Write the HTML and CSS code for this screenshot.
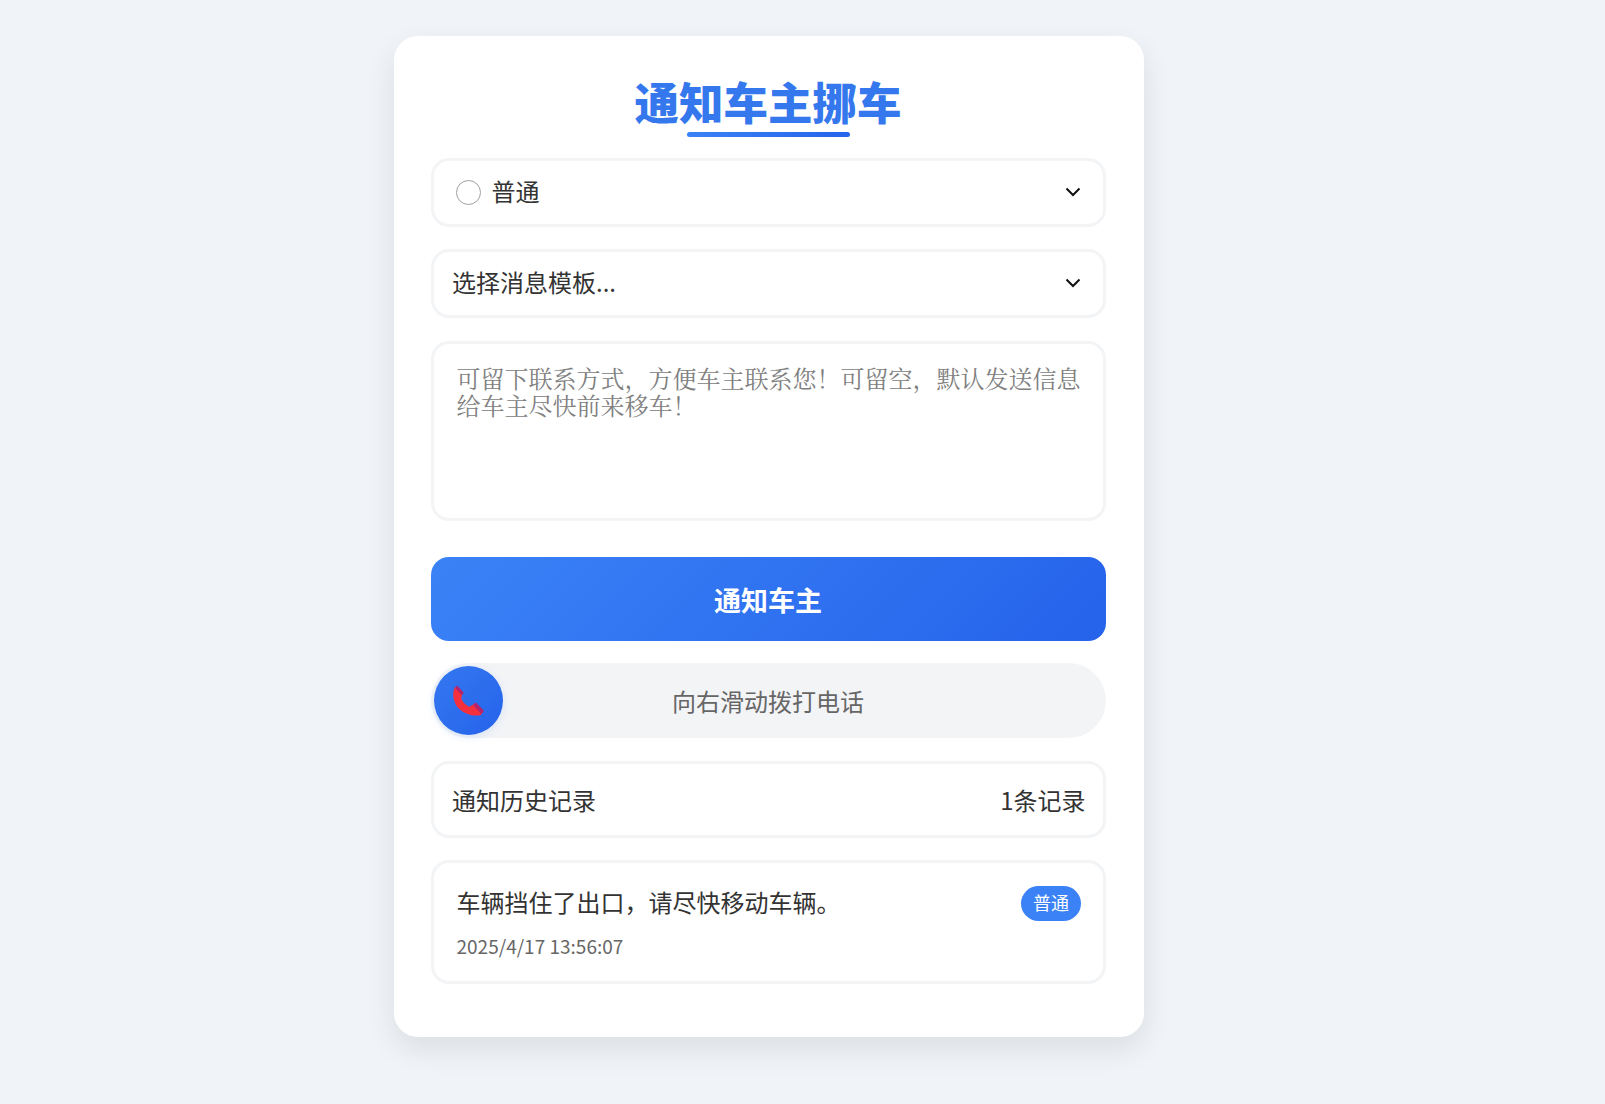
FILE: index.html
```html
<!DOCTYPE html>
<html lang="zh-CN">
<head>
    <meta charset="UTF-8">
    <meta name="viewport" content="width=device-width, initial-scale=1.0">
    <title>通知车主挪车</title>
    <link rel="stylesheet" href="styles.css">
</head>
<body>
    <div class="card">
        <h1 class="title">通知车主挪车</h1>

        <div class="field selectBox urgency">
            <span class="radio"></span>
            <span>普通</span>
            <svg class="chevron" viewBox="0 0 16 10"><path d="M1.5 1.5 8 8l6.500-6.500"/></svg>
        </div>

        <div class="field selectBox template">
            <span>选择消息模板...</span>
            <svg class="chevron" viewBox="0 0 16 10"><path d="M1.5 1.5 8 8l6.500-6.500"/></svg>
        </div>

        <textarea class="field message" placeholder="可留下联系方式，方便车主联系您！可留空，默认发送信息给车主尽快前来移车！"></textarea>

        <button class="notifyBtn">通知车主</button>

        <div class="slider">
            <div class="thumb">
                <svg class="phone" viewBox="0 0 30 30">
                    <path class="handset" d="M2 2 L9 8 L8 13 C9 16 13 20 16 21 L21 18 L29 26 L27 29 C18 31 9 27 4 21 C0 15 -1 8 2 2 Z"/>
                    <path class="ends" d="M2 3 L4 0.500 L10.500 7.500 L8.500 10 Z"/>
                    <path class="ends" d="M19.500 19.500 L22 17 L30 25 L27.500 28 Z"/>
                </svg>
            </div>
            <span>向右滑动拨打电话</span>
        </div>

        <div class="field historyHead">
            <span>通知历史记录</span>
            <span>1条记录</span>
        </div>

        <div class="field historyItem">
            <div class="itemTop">
                <span class="itemText">车辆挡住了出口，请尽快移动车辆。</span>
                <span class="badge">普通</span>
            </div>
            <div class="itemTime">2025/4/17 13:56:07</div>
        </div>
    </div>
</body>
</html>
```

FILE: styles.css
```css
* {
  box-sizing: border-box;
}

html {
  font-family: "Noto Sans CJK SC", "Noto Sans", sans-serif;
}

body {
  margin: 0;
  min-height: 1104px;
  padding: 36px 0 0 394px;
  background-color: #f0f4f8;
  color: #333;
  font-size: 24px;
}

.card {
  width: 750px;
  height: 1001px;
  padding: 38px 38.500px 0 36.500px;
  background-color: #fff;
  border-radius: 24px;
  box-shadow: 0 12px 30px rgba(0, 0, 0, 0.09);
}

.title {
  position: relative;
  margin: 0 0 31px;
  height: 53px;
  font-size: 44.500px;
  line-height: 53px;
  font-weight: 900;
  text-align: center;
  color: #3578ee;
}

.title::after {
  content: "";
  position: absolute;
  left: 256px;
  bottom: -10px;
  width: 163px;
  height: 5px;
  border-radius: 3px;
  background: linear-gradient(135deg, #3b82f6, #2563eb);
}

.field {
  display: block;
  width: 100%;
  background-color: #fff;
  border: 3px solid #f3f4f6;
  border-radius: 18px;
}

.selectBox {
  display: flex;
  align-items: center;
  height: 69px;
  padding: 0 22px 5px 18.500px;
  margin-bottom: 22px;
}

.urgency {
  padding-left: 22px;
}

.radio {
  width: 25px;
  height: 25px;
  margin: 5px 11px 0 0;
  border: 1px solid #a0a0a0;
  border-radius: 50%;
}

.chevron {
  width: 16px;
  height: 10px;
  margin: 4px 0 0 auto;
  fill: none;
  stroke: #111;
  stroke-width: 2;
}

.message {
  height: 180px;
  margin-top: 23px;
  padding: 19.500px 22px 19.500px 23px;
  font-family: "Noto Serif CJK SC", "Liberation Serif", "Noto Sans CJK SC", serif;
  font-size: 24px;
  line-height: 27px;
  resize: none;
  outline: none;
}

.message::placeholder {
  color: #808080;
}

.notifyBtn {
  display: block;
  width: 100%;
  height: 84px;
  margin-top: 36px;
  padding: 1px 0 0;
  border: none;
  border-radius: 18px;
  background: linear-gradient(135deg, #3b82f6, #2563eb);
  color: #fff;
  font-family: inherit;
  font-size: 27px;
  font-weight: 700;
}

.slider {
  position: relative;
  display: flex;
  align-items: center;
  justify-content: center;
  height: 75px;
  margin: 22px 0 23px;
  border-radius: 38px;
  background-color: #f3f4f6;
  color: #666;
}

.thumb {
  position: absolute;
  left: 3px;
  top: 3px;
  display: flex;
  align-items: center;
  justify-content: center;
  width: 69px;
  height: 69px;
  border-radius: 50%;
  background: linear-gradient(135deg, #3578f0, #2563eb);
  box-shadow: 0 2px 8px rgba(59, 130, 246, 0.14);
}

.phone {
  width: 31px;
  height: 31px;
}

.handset {
  fill: #f5303c;
}

.ends {
  fill: #b4246c;
}

.historyHead {
  display: flex;
  justify-content: space-between;
  align-items: center;
  height: 77px;
  padding: 0 17px 0 18.500px;
  margin-bottom: 22px;
}

.historyItem {
  height: 124px;
  padding: 21px 21.500px 21px 23px;
}

.itemTop {
  display: flex;
  justify-content: space-between;
  align-items: center;
}

.itemText {
  padding-bottom: 4px;
}

.badge {
  padding: 3px 12px 5px;
  border-radius: 18px;
  background-color: #3b82f6;
  color: #fff;
  font-size: 18px;
  line-height: 27px;
}

.itemTime {
  margin-top: 8px;
  color: #666;
  font-size: 19px;
  line-height: 29px;
}
```
